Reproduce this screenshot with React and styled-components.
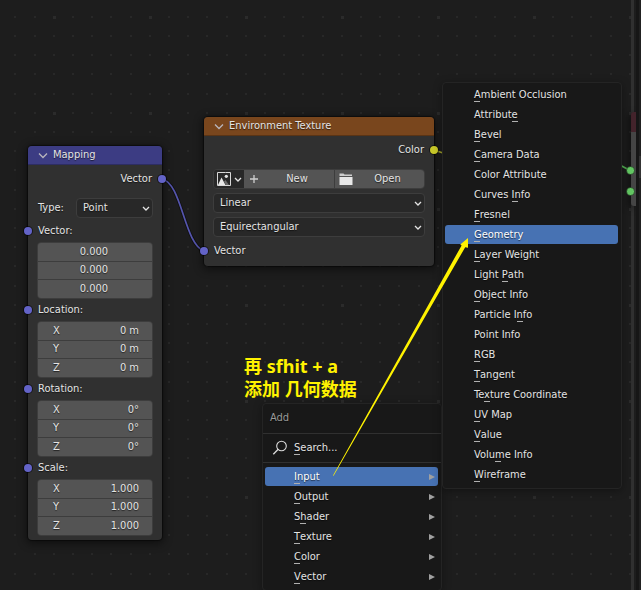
import React from "react";
import styled, { createGlobalStyle, css } from "styled-components";

const font = '"DejaVu Sans Condensed", "DejaVu Sans", sans-serif';

const GlobalStyle = createGlobalStyle`
  *, *::before, *::after { box-sizing: border-box; }
  body {
    margin: 0;
    background: #1d1d1d;
    overflow: hidden;
  }
  body, button, input, select {
    font-family: ${font};
    font-size: 11px;
    line-height: 16px;
    color: #e4e4e4;
  }
  button, input, select {
    margin: 0;
    padding: 0;
    border: 0;
    background: none;
    outline: none;
    min-width: 0;
  }
`;

const Editor = styled.div`
  display: flex;
  height: 100vh;
  overflow: hidden;
`;

const Canvas = styled.main`
  position: relative;
  flex: 1;
  overflow: hidden;
  background: #1d1d1d;
  text-shadow: 0 1px 1px rgba(0, 0, 0, 0.6);
`;

const ScrollTrack = styled.div`
  position: absolute;
  top: 0;
  bottom: 0;
  right: 2px;
  width: 3px;
  background: #303030;
`;

const AreaGap = styled.div`
  width: 3px;
  background: #161616;
`;

const SidePanel = styled.aside`
  width: 2px;
  padding-top: 156px;
  background: #212121;
`;

const SideWidget = styled.div`
  height: 22px;
  background: #343434;
`;

const Layer = styled.svg`
  position: absolute;
  inset: 0;
  width: 100%;
  height: 100%;
  pointer-events: none;
`;

const NodeBox = styled.section`
  position: absolute;
  left: ${(p) => p.$x}px;
  top: ${(p) => p.$y}px;
  width: ${(p) => p.$w}px;
  border-radius: 4px;
  background: #303030;
  box-shadow: 0 0 1px 1px rgba(0, 0, 0, 0.45), 0 2px 8px 2px rgba(0, 0, 0, 0.45);
`;

const NodeHeader = styled.header`
  display: flex;
  align-items: center;
  gap: 5px;
  height: 19px;
  padding-left: 10px;
  border-radius: 4px 4px 0 0;
  background: ${(p) => p.$color};
  border-bottom: 1px solid rgba(0, 0, 0, 0.25);
`;

const NodeTitle = styled.h2`
  margin: 0;
  font-size: 11px;
  font-weight: 400;
`;

const NodeBody = styled.div`
  padding: 4px ${(p) => p.$pad}px;
`;

const SocketRow = styled.div`
  position: relative;
  display: flex;
  align-items: center;
  height: ${(p) => (p.$output ? 20 : 22)}px;
  justify-content: ${(p) => (p.$output ? "flex-end" : "flex-start")};
  margin-bottom: ${(p) => (p.$output ? 9 : 0)}px;
  padding: 0 1px;
`;

const Socket = styled.span`
  position: absolute;
  top: 50%;
  ${(p) => (p.$output ? "right" : "left")}: ${(p) => -p.$pad - 4}px;
  width: 8px;
  height: 8px;
  margin-top: -4px;
  border-radius: 50%;
  background: ${(p) => p.$color};
  box-shadow: 0 0 0 1px rgba(0, 0, 0, 0.55);
`;

const TypeRow = styled.div`
  display: grid;
  grid-template-columns: 38px 1fr;
  align-items: center;
  margin-bottom: 2px;
  padding-left: 1px;
`;

const SelectShell = styled.div`
  display: grid;
  align-items: center;
  height: 20px;
  border: 1px solid #3d3d3d;
  border-radius: 4px;
  background: #282828;
  & > * { grid-area: 1 / 1; }
  & > svg { justify-self: end; margin-right: 1px; pointer-events: none; }
`;

const Select = styled.select`
  appearance: none;
  width: 100%;
  height: 18px;
  padding-left: 6px;
  text-shadow: inherit;
`;

const FieldGroup = styled.div`
  display: grid;
  gap: 1px;
  height: 57px;
  grid-auto-rows: 1fr;
  border: 1px solid #3d3d3d;
  border-radius: 4px;
  overflow: hidden;
  background: #3d3d3d;
`;

const Field = styled.label`
  display: flex;
  align-items: center;
  padding: 0 ${(p) => (p.$center ? 15 : 13)}px 0 ${(p) => (p.$center ? 13 : 15)}px;
  background: #545454;
`;

const FieldInput = styled.input`
  flex: 1;
  width: 100%;
  height: 16px;
  text-align: ${(p) => (p.$center ? "center" : "right")};
  text-shadow: inherit;
`;

const ImageRow = styled.div`
  display: grid;
  grid-template-columns: 30px 1fr 1fr;
  height: 20px;
  border: 1px solid #3d3d3d;
  border-radius: 4px;
  overflow: hidden;
`;

const BrowseButton = styled.button`
  display: flex;
  align-items: center;
  gap: 2px;
  padding-left: 3px;
  background: #282828;
`;

const ImageButton = styled.button`
  display: grid;
  grid-template-columns: 14px 1fr;
  align-items: center;
  padding: 0 2px 0 4px;
  background: #545454;
  text-shadow: inherit;
  & + & { border-left: 1px solid #3d3d3d; }
`;

const DropStack = styled.div`
  display: grid;
  gap: 4px;
  margin-bottom: 3px;
`;

const Menu = styled.nav`
  position: absolute;
  left: ${(p) => p.$x}px;
  top: ${(p) => p.$y}px;
  width: 180px;
  padding: 2px 3px 4px 2px;
  border: 1px solid #242424;
  border-radius: 4px;
  background: #181818;
  box-shadow: 0 2px 8px rgba(0, 0, 0, 0.35);
`;

const MenuList = styled.ul`
  display: grid;
  gap: 1px;
  margin: 0;
  padding: 0;
  list-style: none;
`;

const MenuItem = styled.button`
  display: flex;
  align-items: center;
  justify-content: space-between;
  width: 100%;
  height: 19px;
  padding: 0 3px 0 29px;
  border-radius: 3px;
  text-align: left;
  text-shadow: inherit;
  ${(p) => p.$active && css`
    background: #4772b3;
    color: #fff;
  `}
`;

const MenuTitle = styled.div`
  height: 27px;
  padding: 4px 5px;
  color: #9a9a9a;
`;

const MenuRule = styled.hr`
  height: 1px;
  margin: 0 -3px 0 -2px;
  border: 0;
  background: #303030;
`;

const SearchItem = styled.button`
  display: flex;
  align-items: center;
  gap: 6px;
  width: 100%;
  height: 28px;
  padding-left: 7px;
  text-shadow: inherit;
`;

const ListSpacer = styled.div`
  height: 4px;
`;

const Mnemonic = styled.span`
  position: relative;
  &::after {
    content: "";
    position: absolute;
    left: 0;
    bottom: -1px;
    width: 6px;
    height: 1px;
    background: #b0b0b0;
  }
`;

const Note = styled.p`
  position: absolute;
  left: 244px;
  top: 355px;
  margin: 0;
  font: 700 18px/23px "Noto Sans", "Noto Sans CJK SC", sans-serif;
  color: #fff200;
  text-shadow: none;
  white-space: nowrap;
`;

const CutNode = styled.div`
  position: absolute;
  right: 0;
  top: 112px;
  width: 5px;
  height: 94px;
  border-top: 20px solid #43232b;
  border-radius: 3px 0 0 3px;
  background: #454545;
  box-shadow: -2px 2px 7px rgba(0, 0, 0, 0.6);
`;

const Chevron = ({ dim }) => (
  <svg width="10" height="10" viewBox="0 0 10 10" fill="none" aria-hidden="true">
    <path
      d={dim ? "M1 3.5L5 7.5L9 3.5" : "M2 4L5 7L8 4"}
      stroke={dim ? "#b9b6bd" : "#e4e4e4"}
      strokeWidth="1.3"
    />
  </svg>
);

const ImageIcon = () => (
  <svg width="14" height="14" viewBox="0 0 14 14" aria-hidden="true">
    <path d="M8.5 .5H.5V13.5H13.5V.5H8.5" fill="none" stroke="#d8d8d8" />
    <path d="M1 13L4.5 5.5L8.5 13Z" fill="#e8e8e8" />
    <path d="M7 9.5L8.5 8L12 13H8.8Z" fill="#6a6a6a" />
    <circle cx="9.3" cy="4.3" r="1.6" fill="#e4e4e4" />
  </svg>
);

const PlusIcon = () => (
  <svg width="14" height="12" viewBox="0 0 14 12" aria-hidden="true">
    <path d="M2 6H10M6 2V10" stroke="#cfcfcf" strokeWidth="1.3" />
  </svg>
);

const FolderIcon = () => (
  <svg width="14" height="14" viewBox="0 0 14 14" aria-hidden="true">
    <path d="M0.5 4V1.5H4.5L5.5 2.5H13V4Z" fill="#cfcfcf" />
    <path d="M0.5 5H13.5V13H0.5Z" fill="#e8e8e8" />
  </svg>
);

const SearchIcon = () => (
  <svg width="16" height="16" viewBox="0 0 16 16" fill="none" aria-hidden="true">
    <circle cx="9.5" cy="6" r="4.8" stroke="#dcdcdc" strokeWidth="1.1" />
    <path d="M6.2 9.3L1.3 14.2" stroke="#dcdcdc" strokeWidth="1.3" />
  </svg>
);

const SubmenuIcon = () => (
  <svg width="6" height="8" viewBox="0 0 6 8" aria-hidden="true">
    <path d="M0 1L6 4L0 7Z" fill="#a0a0a0" />
  </svg>
);

const PURPLE = "#6363c7";

const vectorInputs = [
  { name: "Location:", value: "0 m" },
  { name: "Rotation:", value: "0°" },
  { name: "Scale:", value: "1.000" },
];

/* An underscore precedes the shortcut letter of each entry. */
const inputNodes = [
  "_Ambient Occlusion", "Attribut_e", "_Bevel", "_Camera Data", "Color Attribute",
  "Curves _Info", "_Fresnel", "_Geometry", "_Layer Weight", "Light _Path",
  "_Object Info", "Particle I_nfo", "Point Info", "_RGB", "_Tangent",
  "Te_xture Coordinate", "_UV Map", "_Value", "Volu_me Info", "_Wireframe",
];

const categories = ["_Input", "_Output", "S_hader", "_Texture", "_Color", "_Vector"];

function Label({ text }) {
  const at = text.indexOf("_");
  if (at < 0) return <span>{text}</span>;
  return (
    <span>
      {text.slice(0, at)}
      <Mnemonic>{text[at + 1]}</Mnemonic>
      {text.slice(at + 2)}
    </span>
  );
}

function Dropdown({ value, label, id }) {
  return (
    <SelectShell>
      <Select id={id} aria-label={label} defaultValue={value}>
        <option>{value}</option>
      </Select>
      <Chevron />
    </SelectShell>
  );
}

function Header({ title, color }) {
  return (
    <NodeHeader $color={color}>
      <Chevron dim />
      <NodeTitle>{title}</NodeTitle>
    </NodeHeader>
  );
}

function Port({ name, color = PURPLE, output, pad }) {
  return (
    <SocketRow $output={output}>
      <Socket $output={output} $color={color} $pad={pad} />
      {name}
    </SocketRow>
  );
}

function MappingNode() {
  return (
    <NodeBox $x={28} $y={146} $w={134}>
      <Header title="Mapping" color="#3c3c83" />
      <NodeBody $pad={9}>
        <Port name="Vector" output pad={9} />
        <TypeRow>
          <label htmlFor="mapping-type">Type:</label>
          <Dropdown id="mapping-type" value="Point" />
        </TypeRow>
        <Port name="Vector:" pad={9} />
        <FieldGroup>
          {["X", "Y", "Z"].map((axis) => (
            <Field key={axis} $center>
              <FieldInput $center aria-label={`Vector ${axis}`} defaultValue="0.000" />
            </Field>
          ))}
        </FieldGroup>
        {vectorInputs.map(({ name, value }) => (
          <React.Fragment key={name}>
            <Port name={name} pad={9} />
            <FieldGroup>
              {["X", "Y", "Z"].map((axis) => (
                <Field key={axis}>
                  {axis}
                  <FieldInput defaultValue={value} />
                </Field>
              ))}
            </FieldGroup>
          </React.Fragment>
        ))}
      </NodeBody>
    </NodeBox>
  );
}

function EnvironmentNode() {
  return (
    <NodeBox $x={204} $y={117} $w={230}>
      <Header title="Environment Texture" color="#79461d" />
      <NodeBody $pad={9}>
        <Port name="Color" color="#c7c729" output pad={9} />
        <DropStack>
          <ImageRow>
            <BrowseButton aria-label="Browse images">
              <ImageIcon />
              <Chevron />
            </BrowseButton>
            <ImageButton><PlusIcon />New</ImageButton>
            <ImageButton><FolderIcon />Open</ImageButton>
          </ImageRow>
          <Dropdown label="Interpolation" value="Linear" />
          <Dropdown label="Projection" value="Equirectangular" />
        </DropStack>
        <Port name="Vector" pad={9} />
      </NodeBody>
    </NodeBox>
  );
}

const steps = [0, 19, 38, 57, 77];

function Grid() {
  return (
    <Layer aria-hidden="true">
      <defs>
        <pattern id="dots" x="53" y="16" width="96" height="96" patternUnits="userSpaceOnUse">
          {steps.map((y) =>
            steps.map((x) => (
              <rect
                key={`${x}-${y}`}
                x={x}
                y={y}
                width={x + y === 0 ? 3 : 2}
                height={x + y === 0 ? 3 : 2}
                fill={x + y === 0 ? "#2b2b2b" : "#282828"}
              />
            ))
          )}
        </pattern>
      </defs>
      <rect width="100%" height="100%" fill="url(#dots)" />
    </Layer>
  );
}

function Wires() {
  return (
    <Layer fill="none" aria-hidden="true">
      <path d="M162 179C182 183 184 244 204 251" stroke="#111" strokeWidth="3.5" />
      <path d="M162 179C182 183 184 244 204 251" stroke="#5555ad" strokeWidth="1.7" />
      <path d="M434 150L446 154" stroke="#a5a52b" strokeWidth="1.7" />
      <path d="M618 164L631 171" stroke="#55b555" strokeWidth="1.7" />
    </Layer>
  );
}

export default function App() {
  return (
    <Editor>
      <GlobalStyle />
      <Canvas>
        <Grid />
        <ScrollTrack />
        <Wires />
        <CutNode />
        <Layer aria-hidden="true">
          <circle cx="630.5" cy="170.5" r="4" fill="#63c763" stroke="#111" strokeOpacity=".5" />
          <circle cx="630.5" cy="191.5" r="4" fill="#63c763" stroke="#111" strokeOpacity=".5" />
        </Layer>
        <MappingNode />
        <EnvironmentNode />
        <Menu $x={262} $y={403} aria-label="Add">
          <MenuTitle>Add</MenuTitle>
          <MenuRule />
          <SearchItem><SearchIcon /><Label text="_Search..." /></SearchItem>
          <MenuRule />
          <ListSpacer />
          <MenuList>
            {categories.map((text, i) => (
              <li key={text}>
                <MenuItem $active={i === 0}>
                  <Label text={text} />
                  <SubmenuIcon />
                </MenuItem>
              </li>
            ))}
          </MenuList>
        </Menu>
        <Menu $x={442} $y={82} aria-label="Input">
          <MenuList>
            {inputNodes.map((text) => (
              <li key={text}>
                <MenuItem $active={text === "_Geometry"}>
                  <Label text={text} />
                </MenuItem>
              </li>
            ))}
          </MenuList>
        </Menu>
        <Note>再 sfhit + a<br />添加 几何数据</Note>
        <Layer aria-hidden="true">
          <path
            d="M333 475.5L461.6 245.4L460.3 244.6L468 238L468 247.8L465.2 247.2L333.6 475.7Z"
            fill="#fff200"
          />
        </Layer>
      </Canvas>
      <AreaGap />
      <SidePanel><SideWidget /></SidePanel>
    </Editor>
  );
}
